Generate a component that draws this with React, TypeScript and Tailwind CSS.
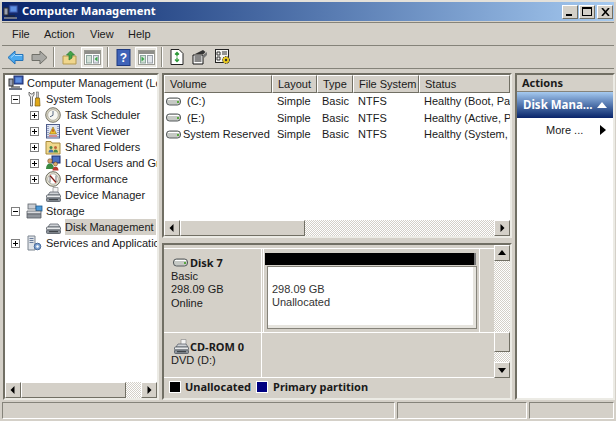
import type { ReactNode } from "react";

const DITHER = "bg-[repeating-conic-gradient(#d4d0c8_0_25%,#ffffff_0_50%)] bg-[length:2px_2px]";
const RAISED = "border border-t-white border-l-white border-r-[#716f64] border-b-[#716f64] bg-[#d4d0c8]";
const SUNKEN = "border-2 border-t-[#716f64] border-l-[#716f64] border-r-[#ecebe5] border-b-[#ecebe5]";
const BOLD = "font-bold text-[11px] font-['Noto_Sans']";

function Tri({ dir }: { dir: "up" | "down" | "left" | "right" }) {
  const pts = {
    up: "4,1 0,6 8,6",
    down: "0,2 8,2 4,7",
    left: "5.5,0 5.5,8 1.5,4",
    right: "2.5,0 2.5,8 6.5,4",
  }[dir];
  return (
    <svg width="8" height="8" viewBox="0 0 8 8">
      <polygon points={pts} fill="#000" />
    </svg>
  );
}

function ScrollBtn({ dir }: { dir: "up" | "down" | "left" | "right" }) {
  return (
    <div className={`${RAISED} w-[16px] h-[16px] shrink-0 flex items-center justify-center`}>
      <Tri dir={dir} />
    </div>
  );
}

function HScroll({ thumb }: { thumb: number }) {
  return (
    <div className={`h-[16px] flex shrink-0 ${DITHER}`}>
      <ScrollBtn dir="left" />
      <div className={RAISED} style={{ width: thumb }} />
      <div className="grow" />
      <ScrollBtn dir="right" />
    </div>
  );
}

function Expander({ open }: { open?: boolean }) {
  return (
    <svg width="9" height="9" viewBox="0 0 9 9" className="shrink-0">
      <rect x="0.5" y="0.5" width="8" height="8" fill="#fff" stroke="#7f7f7f" />
      <path d={open ? "M2 4.5h5" : "M2 4.5h5M4.5 2v5"} stroke="#000" />
    </svg>
  );
}

function Computer() {
  return (
    <svg width="16" height="16" viewBox="0 0 16 16">
      <rect x="6" y="1" width="9" height="8" fill="#3c5fb5" stroke="#1d2d6b" />
      <rect x="7.5" y="2.5" width="6" height="5" fill="#5f8fe0" />
      <rect x="1" y="4" width="4" height="7" fill="#9aa0b0" stroke="#333" />
      <path d="M1 13h13v2H1z" fill="#6d7484" />
      <path d="M3 12h9" stroke="#222" />
    </svg>
  );
}

function Tools() {
  return (
    <svg width="16" height="16" viewBox="0 0 16 16">
      <path d="M3 1v3l1.500 2v9h2V6L8 4V1L6.500 3h-1.500z" fill="#e8e8e8" stroke="#555" strokeWidth="0.8" />
      <rect x="10.500" y="1" width="2" height="6" fill="#c8c8c8" stroke="#666" strokeWidth="0.6" />
      <path d="M9.500 7h4l.5 8h-5z" fill="#e0a818" stroke="#7c5b0a" strokeWidth="0.7" />
    </svg>
  );
}

function Clock() {
  return (
    <svg width="16" height="16" viewBox="0 0 16 16">
      <circle cx="8" cy="8" r="7.300" fill="#d8d4c0" stroke="#77756a" />
      <circle cx="8" cy="8" r="5.300" fill="#f7f7f2" stroke="#a3a196" strokeWidth="0.7" />
      <path d="M8 4v4.300l-3 1.500" stroke="#5a6a85" fill="none" />
    </svg>
  );
}

function EventViewer() {
  return (
    <svg width="16" height="16" viewBox="0 0 16 16">
      <rect x="1.500" y="1.500" width="13" height="13.500" fill="#dfe5f3" stroke="#4e5d8c" />
      <path d="M3 3v11M13 3v11" stroke="#4e5d8c" strokeDasharray="1 1" />
      <path d="M8 4l3.500 7h-7z" fill="#f0c030" stroke="#8a6a10" strokeWidth="0.6" />
      <path d="M8 6.300v2.500" stroke="#a01515" />
      <path d="M4 13h8" stroke="#c03030" />
    </svg>
  );
}

function SharedFolder() {
  return (
    <svg width="16" height="16" viewBox="0 0 16 16">
      <path d="M1 4V2.500h5L7 4h8v11H1z" fill="#f0d88c" stroke="#a88a3c" />
      <circle cx="6" cy="8.500" r="1.500" fill="#43884a" />
      <path d="M3.500 13.500c0-2 1-3 2.500-3s2.500 1 2.500 3z" fill="#3f6fb0" />
      <circle cx="10.500" cy="8.500" r="1.500" fill="#c0663c" />
      <path d="M8.500 13.500c0-2 .8-3 2-3s2.500 1 2.500 3z" fill="#43884a" />
    </svg>
  );
}

function Users() {
  return (
    <svg width="16" height="16" viewBox="0 0 16 16">
      <rect x="7" y="1" width="8" height="7" fill="#4a6fc0" stroke="#1d2d6b" />
      <circle cx="5" cy="6" r="2.300" fill="#d9a066" stroke="#5b3a1a" strokeWidth="0.5" />
      <path d="M1 14c0-3.500 1.500-5.500 4-5.500s4 2 4 5.500z" fill="#3a8a42" />
      <circle cx="10.500" cy="9" r="2" fill="#e0b070" stroke="#5b3a1a" strokeWidth="0.5" />
      <path d="M7.500 15.500c0-2.500 1-3.800 3-3.800s3 1.300 3 3.800z" fill="#b83a30" />
    </svg>
  );
}

function Gauge() {
  return (
    <svg width="16" height="16" viewBox="0 0 16 16">
      <circle cx="8" cy="8" r="7.300" fill="#e6e3d4" stroke="#6b6a5e" />
      <circle cx="8" cy="8" r="5.200" fill="#fff" stroke="#8f8d80" strokeWidth="0.6" />
      <path d="M5 4.500L8 8l3 3.500" stroke="#c62b20" strokeWidth="1.500" />
      <path d="M5 11.500V5l6 6V4.500" stroke="#2e2e2e" strokeWidth="0.7" fill="none" />
    </svg>
  );
}

function DiskDrive({ doc }: { doc?: boolean }) {
  return (
    <svg width="17" height="16" viewBox="0 0 17 16" className="shrink-0">
      {doc ? <path d="M8 0.500h5v6H8z" fill="#f3f3f3" stroke="#8f8f8f" strokeWidth="0.7" /> : null}
      <path d="M3 8l2-3h8l2 3z" fill="#cfd2d6" stroke="#5f6670" strokeWidth="0.8" />
      <rect x="1.500" y="8" width="14" height="3" rx="1" fill="#e8eaec" stroke="#4f555e" strokeWidth="0.8" />
      <rect x="1.500" y="11" width="14" height="3.500" rx="1" fill="#8d939b" stroke="#4f555e" strokeWidth="0.8" />
      <path d="M4 12.700h9" stroke="#2f3338" />
    </svg>
  );
}

function Storage() {
  return (
    <svg width="17" height="16" viewBox="0 0 17 16">
      <rect x="2" y="1" width="8" height="5" fill="#c9ccd1" stroke="#5e646c" strokeWidth="0.8" />
      <rect x="10" y="3" width="6" height="5" fill="#4d9ad8" stroke="#1f5a8f" strokeWidth="0.8" />
      <path d="M1 8h14v3H1z" fill="#d8dade" stroke="#555b63" strokeWidth="0.8" />
      <path d="M1 11h14v4H1z" fill="#90959c" stroke="#555b63" strokeWidth="0.8" />
    </svg>
  );
}

function Services() {
  return (
    <svg width="16" height="16" viewBox="0 0 16 16">
      <path d="M2 1h7v14H2z" fill="#dfe3e8" stroke="#7d8590" />
      <path d="M3.500 3.500h4M3.500 5.500h4M3.500 7.500h4" stroke="#6a7d9c" />
      <circle cx="11.500" cy="11.500" r="3.300" fill="#7da0cf" stroke="#486a9a" />
      <circle cx="11.500" cy="11.500" r="1.200" fill="#fff" />
    </svg>
  );
}

function VolumeIcon() {
  return (
    <svg width="16" height="9" viewBox="0 0 16 9" className="shrink-0">
      <rect x="0.500" y="1" width="14" height="7" rx="3" fill="#c6c9c5" stroke="#565b5d" />
      <path d="M2 2.500h11" stroke="#fff" />
      <rect x="11" y="4" width="2" height="2" fill="#59a83f" />
    </svg>
  );
}

function TreeRow({
  depth,
  expander,
  icon,
  label,
  selected,
}: {
  depth: number;
  expander?: "open" | "closed";
  icon: ReactNode;
  label: string;
  selected?: boolean;
}) {
  return (
    <div className="h-[16px] flex items-center whitespace-nowrap">
      <div className={depth === 0 ? "w-[3px] shrink-0" : depth === 1 ? "w-[6px] shrink-0" : "w-[25px] shrink-0"} />
      {depth > 0 && (
        <div className="w-[15px] shrink-0 flex">{expander && <Expander open={expander === "open"} />}</div>
      )}
      <div className={depth === 0 ? "w-[19px] shrink-0 flex" : "w-[20px] shrink-0 flex"}>{icon}</div>
      <span className={selected ? "bg-[#d4d0c8] pr-[2px] leading-[16px]" : "leading-[16px]"}>{label}</span>
    </div>
  );
}

function ColHeader({ label, width }: { label: string; width: number }) {
  return (
    <div
      style={{ width }}
      className={`${RAISED} h-[18px] shrink-0 pl-[5px] flex items-center overflow-hidden whitespace-nowrap`}
    >
      {label}
    </div>
  );
}

function VolumeRow({ name, status, inset }: { name: string; status: string; inset?: boolean }) {
  return (
    <div className="h-[16.500px] flex items-center whitespace-nowrap">
      <div className="w-[108px] pl-[2px] shrink-0 flex items-center gap-[1px]">
        <VolumeIcon />
        <span className={inset ? "ml-[4px]" : ""}>{name}</span>
      </div>
      <span className="w-[45px] pl-[5px] shrink-0">Simple</span>
      <span className="w-[36px] pl-[5px] shrink-0">Basic</span>
      <span className="w-[66px] pl-[5px] shrink-0">NTFS</span>
      <span className="pl-[5px]">{status}</span>
    </div>
  );
}

function ToolBtn({ children, pressed }: { children: ReactNode; pressed?: boolean }) {
  return (
    <div
      className={
        pressed
          ? "w-[22px] h-[21px] border border-white bg-[#e9e7e1] flex items-center justify-center shrink-0"
          : "w-[23px] h-[21px] flex items-center justify-center shrink-0"
      }
    >
      {children}
    </div>
  );
}

function Sep({ className }: { className: string }) {
  return <div className={`w-[2px] h-[20px] shrink-0 border-l border-[#8c8a80] border-r border-r-white ${className}`} />;
}

function PaneGlyph({ side }: { side: "left" | "right" }) {
  return (
    <svg width="17" height="15" viewBox="0 0 17 15">
      <rect x="0.500" y="0.500" width="16" height="14" fill="#fff" stroke="#9a9a92" />
      <rect x="1" y="1" width="15" height="3" fill="#8f8f8a" />
      <rect x="2.500" y="5.500" width="5" height="7.500" fill="#d3e0d6" stroke="#8fa7a0" />
      <rect x="9.500" y="5.500" width="5" height="7.500" fill="#e1e5ea" stroke="#9aa0a8" />
      <polygon points={side === "left" ? "13.500,6.500 13.500,11.500 10.500,9" : "3.500,6.500 3.500,11.500 6.500,9"} fill="#3aa54a" />
    </svg>
  );
}

function WinBtn({ children }: { children: ReactNode }) {
  return <div className={`${RAISED} w-[16px] h-[14px] flex items-center justify-center`}>{children}</div>;
}

export default function App() {
  return (
    <div
      className="w-[616px] h-[421px] bg-[#d4d0c8] flex flex-col overflow-hidden text-[11px] text-[#1a1a1a] border-t-2 border-t-[#e4e1da]"
      style={{ fontFamily: '"Liberation Sans", Arial, sans-serif' }}
    >
      {/* title bar */}
      <div className="h-[19px] mx-[2px] shrink-0 flex items-center bg-gradient-to-r from-[#0a246a] to-[#a6caf0]">
        <div className="ml-[1px] mr-[3px] flex">
          <Computer />
        </div>
        <span className="text-white font-bold text-[11.200px] font-['Noto_Sans']">Computer Management</span>
        <div className="ml-auto mr-[1px] flex gap-[1px]">
          <WinBtn>
            <div className="w-[6px] h-[2px] bg-black mt-[7px] -ml-[2px]" />
          </WinBtn>
          <WinBtn>
            <div className="w-[10px] h-[9px] border border-black border-t-2" />
          </WinBtn>
          <div className="ml-[1px]">
            <WinBtn>
              <svg width="9" height="8" viewBox="0 0 9 8">
                <path d="M1 0l7 8M8 0l-7 8" stroke="#000" strokeWidth="1.600" />
              </svg>
            </WinBtn>
          </div>
        </div>
      </div>

      {/* menu bar */}
      <div className="h-[24px] mx-[2px] mt-[1px] shrink-0 flex items-center border-y border-y-[#85837a] pl-[10px] pt-[1px]">
        <span className="w-[32px]">File</span>
        <span className="w-[46px]">Action</span>
        <span className="w-[38px]">View</span>
        <span>Help</span>
      </div>

      {/* toolbar */}
      <div className="h-[23px] mx-[2px] shrink-0 flex items-center border-b border-b-[#85837a] pl-[2px]">
        <ToolBtn>
          <svg width="18" height="15" viewBox="0 0 18 15">
            <path d="M1 7.500l7-6.500v3.500h8v6H8V14z" fill="#4aa8ee" stroke="#2473b8" />
            <path d="M4 7.500l4-3.500M8 5.500h7" stroke="#a9dcff" />
          </svg>
        </ToolBtn>
        <ToolBtn>
          <svg width="18" height="15" viewBox="0 0 18 15">
            <path d="M17 7.500L10 1v3.500H2v6h8V14z" fill="#a8a8a4" stroke="#6f6f68" />
          </svg>
        </ToolBtn>
        <Sep className="mx-[3px]" />
        <ToolBtn>
          <svg width="16" height="15" viewBox="0 0 16 15">
            <path d="M1 6h13v8H1z" fill="#f0d68c" stroke="#b59a50" />
            <path d="M7 10V5H4.500L8.500 1l4 4H10v3z" fill="#43a447" stroke="#2b7a30" strokeWidth="0.7" />
          </svg>
        </ToolBtn>
        <ToolBtn pressed>
          <PaneGlyph side="left" />
        </ToolBtn>
        <Sep className="ml-[4px] mr-[3px]" />
        <ToolBtn>
          <svg width="15" height="17" viewBox="0 0 15 17">
            <rect x="1" y="0.500" width="13" height="16" fill="#3f63b8" stroke="#1f3a80" />
            <text x="7.500" y="13" textAnchor="middle" fontSize="12" fontWeight="700" fill="#fff" fontFamily="Liberation Sans">
              ?
            </text>
          </svg>
        </ToolBtn>
        <ToolBtn pressed>
          <PaneGlyph side="right" />
        </ToolBtn>
        <Sep className="ml-[4px] mr-[2px]" />
        <ToolBtn>
          <svg width="14" height="16" viewBox="0 0 14 16">
            <path d="M1 .5h8l4 4v11H1z" fill="#fff" stroke="#222" />
            <path d="M7 3.500v4M5 5.500l2-2 2 2" stroke="#2e9a3a" strokeWidth="1.300" fill="none" />
            <path d="M7 12.500v-4M5 10.500l2 2 2-2" stroke="#2e9a3a" strokeWidth="1.300" fill="none" />
          </svg>
        </ToolBtn>
        <ToolBtn>
          <svg width="16" height="16" viewBox="0 0 16 16">
            <path d="M1 6h10v9H1z" fill="#fff" stroke="#111" />
            <path d="M2.500 8h7M2.500 10h7M2.500 12h7" stroke="#111" />
            <path d="M3 5l8-4 2.500 2-2 2H5z" fill="#333" />
            <path d="M11 6l4-3v3l-3 3z" fill="#777" />
          </svg>
        </ToolBtn>
        <ToolBtn>
          <svg width="16" height="16" viewBox="0 0 16 16">
            <rect x="0.500" y="0.500" width="13" height="13" fill="#f4f4f0" stroke="#222" />
            <path d="M2 3h3v3H2zM7 3h5M7 5h5M2 8h3v3H2z" stroke="#333" fill="none" />
            <circle cx="11" cy="11" r="3.500" fill="#e8c820" stroke="#333" strokeDasharray="1.500 1" />
            <circle cx="11" cy="11" r="1.200" fill="#333" />
          </svg>
        </ToolBtn>
      </div>

      {/* panes */}
      <div className="h-[327px] mt-[4px] mx-[3px] shrink-0 flex gap-[3px]">
        {/* console tree */}
        <div className={`w-[156px] shrink-0 flex flex-col ${SUNKEN} bg-white`}>
          <div className="grow overflow-hidden">
            <TreeRow depth={0} icon={<Computer />} label="Computer Management (Local)" />
            <TreeRow depth={1} expander="open" icon={<Tools />} label="System Tools" />
            <TreeRow depth={2} expander="closed" icon={<Clock />} label="Task Scheduler" />
            <TreeRow depth={2} expander="closed" icon={<EventViewer />} label="Event Viewer" />
            <TreeRow depth={2} expander="closed" icon={<SharedFolder />} label="Shared Folders" />
            <TreeRow depth={2} expander="closed" icon={<Users />} label="Local Users and Groups" />
            <TreeRow depth={2} expander="closed" icon={<Gauge />} label="Performance" />
            <TreeRow depth={2} icon={<DiskDrive doc />} label="Device Manager" />
            <TreeRow depth={1} expander="open" icon={<Storage />} label="Storage" />
            <TreeRow depth={2} icon={<DiskDrive />} label="Disk Management" selected />
            <TreeRow depth={1} expander="closed" icon={<Services />} label="Services and Applications" />
          </div>
          <HScroll thumb={105} />
        </div>

        {/* center */}
        <div className="w-[350px] shrink-0 flex flex-col">
          <div className={`h-[165px] shrink-0 flex flex-col ${SUNKEN} bg-white`}>
            <div className="flex shrink-0 bg-[#d4d0c8] overflow-hidden">
              <ColHeader label="Volume" width={108} />
              <ColHeader label="Layout" width={45} />
              <ColHeader label="Type" width={36} />
              <ColHeader label="File System" width={66} />
              <ColHeader label="Status" width={91} />
            </div>
            <div className="grow overflow-hidden">
              <VolumeRow name="(C:)" status="Healthy (Boot, Page F" inset />
              <VolumeRow name="(E:)" status="Healthy (Active, Prim" inset />
              <VolumeRow name="System Reserved" status="Healthy (System, Act" />
            </div>
            <HScroll thumb={125} />
          </div>
          <div className="h-[5px] shrink-0" />
          <div className={`grow flex flex-col ${SUNKEN} min-h-0`}>
            <div className="grow flex min-h-0">
              <div className="grow flex flex-col min-w-0 pt-[3px]">
                <div className="h-[85px] flex border-y border-y-white shrink-0">
                  <div className="w-[98px] pl-[7px] pt-[6px] shrink-0 border-r border-r-white leading-[13.500px] flex flex-col">
                    <div className={`flex items-center h-[14.500px] ${BOLD}`}>
                      <div className="ml-[2px] mr-[1px] flex">
                        <VolumeIcon />
                      </div>
                      <span>Disk 7</span>
                    </div>
                    <span>Basic</span>
                    <span>298.09 GB</span>
                    <span>Online</span>
                  </div>
                  <div className="w-[217px] shrink-0 border-x border-x-white ml-[1px] pl-[1px] pr-[2px] pt-[4px] pb-[3px] flex flex-col">
                    <div className="h-[12px] bg-black shrink-0 mr-[1px] border-r-2 border-r-[#777]" />
                    <div className="grow ml-[2px] mt-[1px] border border-[#85837a] bg-[#e6e4de] pr-[3px] pb-[3px] flex flex-col">
                      <div className="grow bg-white pl-[4px] pt-[16px] leading-[13px] text-[#333]">
                        <div>298.09 GB</div>
                        <div>Unallocated</div>
                      </div>
                    </div>
                  </div>
                </div>
                <div className="grow flex border-b border-b-white">
                  <div className="w-[98px] pl-[7px] pt-[6px] shrink-0 border-r border-r-white leading-[13px]">
                    <div className={`flex items-center h-[15px] ${BOLD}`}>
                      <div className="ml-[2px] flex">
                        <DiskDrive doc />
                      </div>
                      <span>CD-ROM 0</span>
                    </div>
                    <div>DVD (D:)</div>
                  </div>
                </div>
              </div>
              <div className={`w-[16px] shrink-0 flex flex-col ${DITHER}`}>
                <ScrollBtn dir="up" />
                <div className="h-[71px] shrink-0" />
                <div className={`${RAISED} h-[20px] shrink-0`} />
                <div className="grow" />
                <ScrollBtn dir="down" />
              </div>
            </div>
            <div className={`h-[20px] shrink-0 flex items-center pl-[5px] pb-[2px] ${BOLD}`}>
              <div className="w-[12px] h-[12px] bg-black border border-white mr-[4px] shrink-0" />
              <span>Unallocated</span>
              <div className="w-[12px] h-[12px] bg-[#000080] border border-white ml-[5px] mr-[5px] shrink-0" />
              <span>Primary partition</span>
            </div>
          </div>
        </div>

        {/* actions */}
        <div className={`w-[100px] shrink-0 flex flex-col ${SUNKEN} bg-white`}>
          <div className={`h-[17px] shrink-0 bg-[#d4d0c8] border-b border-b-[#85837a] pl-[5px] flex items-center ${BOLD}`}>
            Actions
          </div>
          <div className="h-[26px] shrink-0 bg-gradient-to-b from-[#a6caf0] to-[#0a246a] flex items-center pl-[6px] text-white font-bold text-[11.500px] font-['Noto_Sans']">
            <span className="w-[74px] whitespace-nowrap">Disk Mana...</span>
            <svg width="10" height="6" viewBox="0 0 10 6">
              <polygon points="5,0 10,6 0,6" fill="#fff" />
            </svg>
          </div>
          <div className="flex items-center mt-[4px] pl-[29px] h-[16px]">
            <span className="w-[54px] whitespace-nowrap">More ...</span>
            <svg width="6" height="10" viewBox="0 0 6 10">
              <polygon points="0,0 6,5 0,10" fill="#000" />
            </svg>
          </div>
        </div>
      </div>

      {/* status bar */}
      <div className="h-[17px] mt-[2px] mx-[2px] shrink-0 flex gap-[2px]">
        <div className="w-[393px] border border-t-[#85837a] border-l-[#85837a] border-r-white border-b-white" />
        <div className="w-[130px] border border-t-[#85837a] border-l-[#85837a] border-r-white border-b-white" />
        <div className="grow border border-t-[#85837a] border-l-[#85837a] border-r-white border-b-white" />
      </div>
    </div>
  );
}
